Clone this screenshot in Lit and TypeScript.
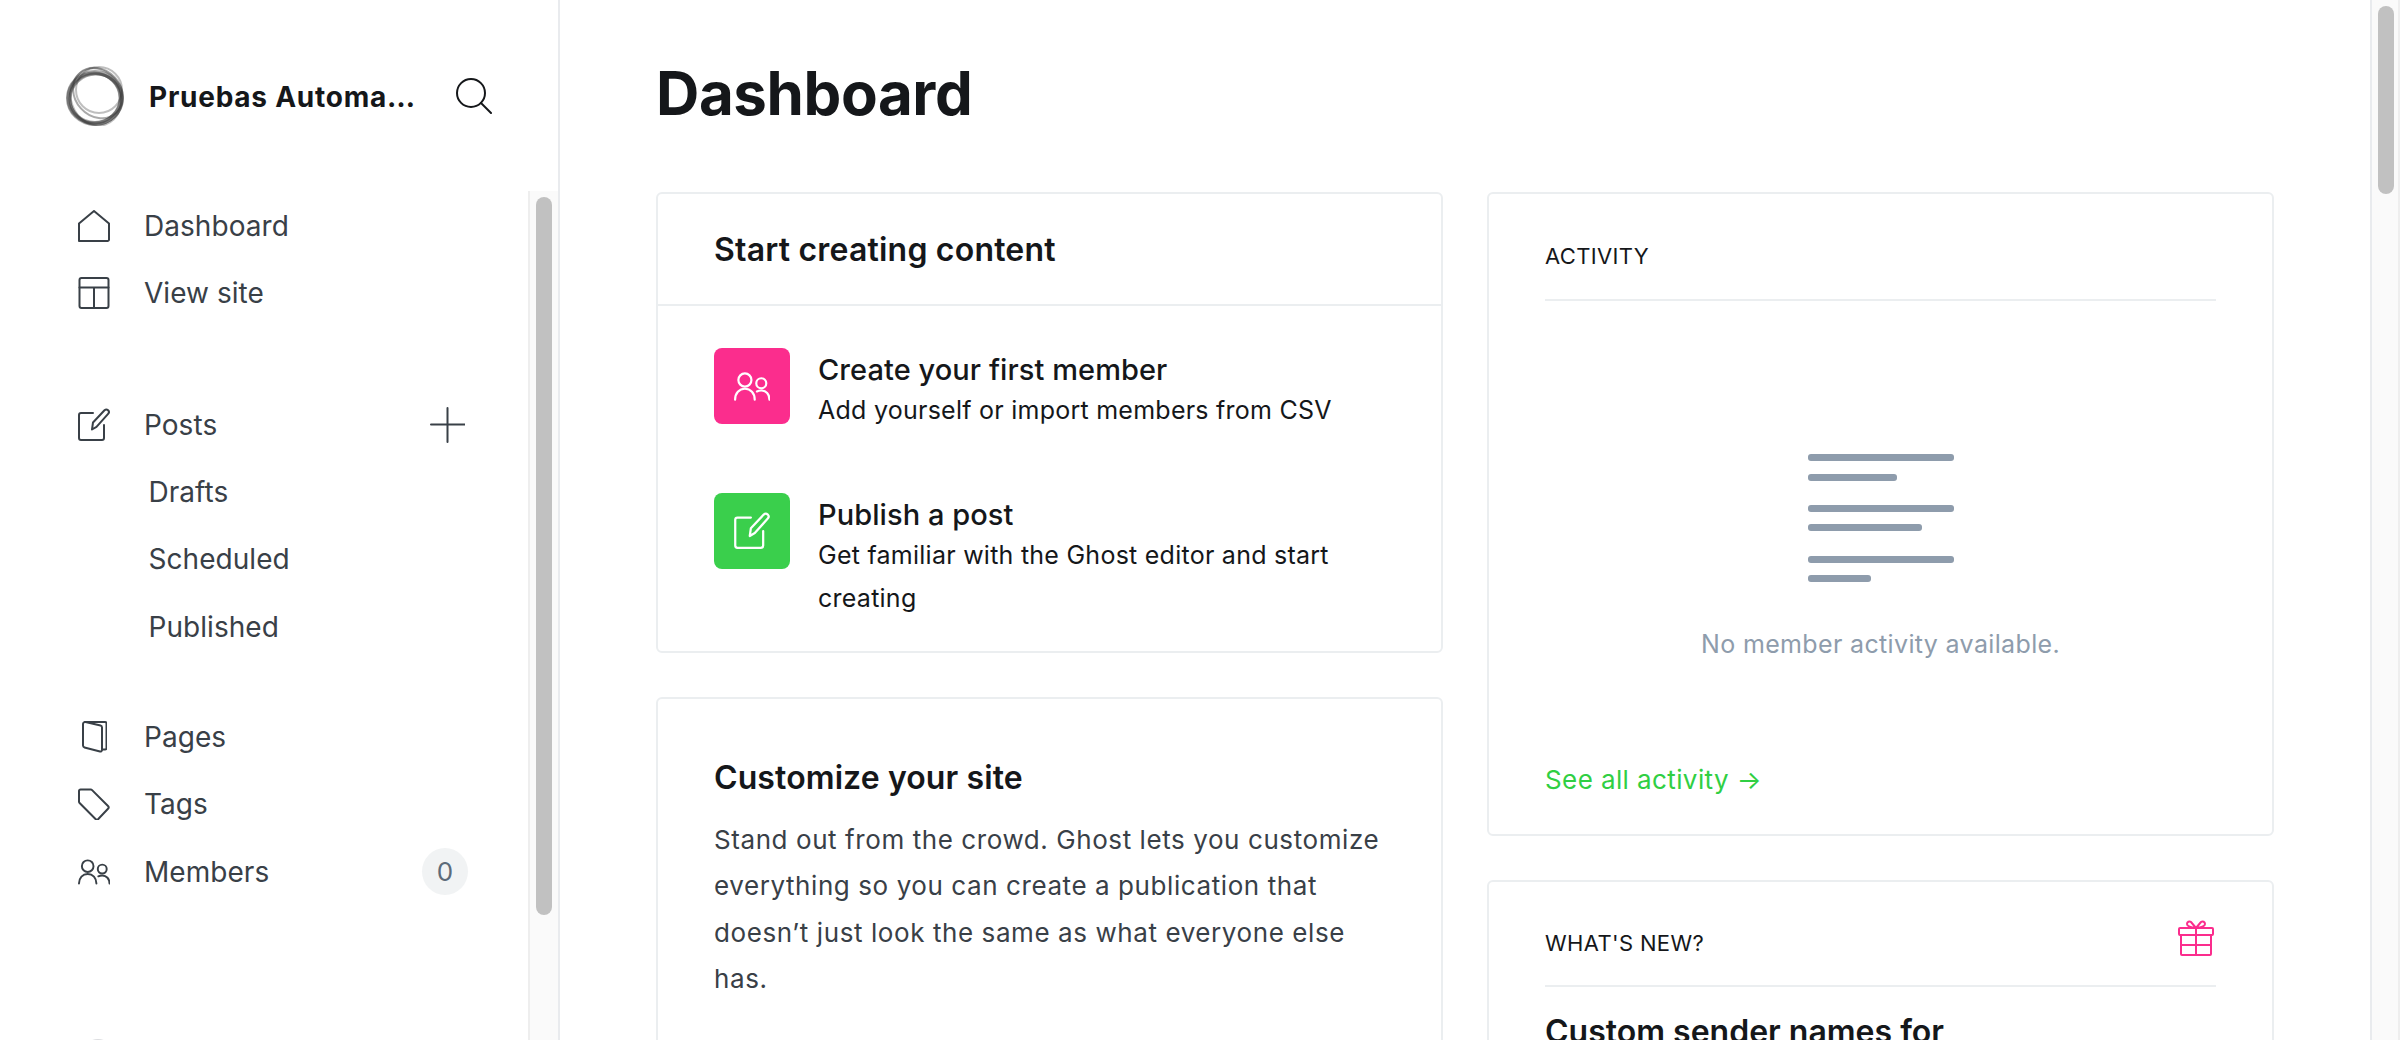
import { LitElement, html, css, svg } from "lit";
import { customElement } from "lit/decorators.js";

const ic = (body: unknown, w = 32, h = 32, vb = "0 0 32 32", cls = "") =>
  html`<svg class=${cls} width=${w} height=${h} viewBox=${vb} fill="none" stroke="currentColor" stroke-width="2" stroke-linecap="round" stroke-linejoin="round">${body}</svg>`;

const home = svg`<path d="M1 31V13.500L16 1l15 12.500V29.500a1.500 1.500 0 0 1-1.500 1.500H2.500A1.500 1.500 0 0 1 1 29.500z"/>`;
const layout = svg`<rect x="1.500" y="1" width="29" height="30" rx="2"/><path d="M1.500 10.500h29M16 10.500V31"/>`;
const edit = svg`<path d="M15 5H3a2 2 0 0 0-2 2v23a2 2 0 0 0 2 2h21a2 2 0 0 0 2-2V17"/><path d="M14 21.500l1-7L26.500 2.300a2.600 2.600 0 0 1 3.600 0 2.600 2.600 0 0 1 0 3.600L18.500 18.800z"/>`;
const page = svg`<path d="M3 1h20a1.500 1.500 0 0 1 1.500 1.500V27a1.500 1.500 0 0 1-1.500 1.500h-3"/><path d="M1 3a2 2 0 0 1 2.500-1.900l15 3.400a2 2 0 0 1 1.500 2V29a1.500 1.500 0 0 1-2 1.500L2.500 26.500A2 2 0 0 1 1 24.600z"/>`;
const tag = svg`<path d="M2.500 1.500h10.200a2 2 0 0 1 1.400.6L30 18a2 2 0 0 1 0 2.800L20.300 31a2 2 0 0 1-2.800 0L1.600 15a2 2 0 0 1-.6-1.400V3a1.500 1.500 0 0 1 1.500-1.500z"/>`;
const people = svg`<circle cx="10" cy="8" r="6"/><path d="M1 26c0-6 3.800-10 9-10s9 4 9 10"/><circle cx="25" cy="11" r="4.600"/><path d="M21 18.500c1.200-.6 2.500-.9 4-.9 4.400 0 7.500 3.400 7.500 8.400"/>`;
const gift = svg`<rect x="1" y="9" width="34" height="7" rx="1"/><rect x="3" y="16" width="30" height="20" rx="1"/><path d="M18 9v27M3 26h30M18 9l-5-6a2.500 2.500 0 0 0-4 2c0 2 4 3.500 9 4zM18 9l5-6a2.500 2.500 0 0 1 4 2c0 2-4 3.500-9 4z"/>`;

const rows1 = [
  { t: "Dashboard", i: home },
  { t: "View site", i: layout },
];

@customElement("app-root")
export class AppRoot extends LitElement {
  static styles = css`
    :host { display: block; width: 2400px; height: 1040px; overflow: hidden; background: #fff; font-family: Inter, "Liberation Sans", sans-serif; color: #15171a; }
    * { box-sizing: border-box; }
    .app { display: flex; height: 1040px; }
    .side { width: 560px; flex: none; border-right: 2px solid #e9ebee; display: flex; flex-direction: column; height: 1040px; }
    .brand { height: 191px; flex: none; display: flex; align-items: center; padding-left: 65px; }
    .logo { flex: none; }
    .title { width: 267px; margin-left: 23px; padding-top: 3px; font-size: 28px; font-weight: 700; letter-spacing: 0.75px; white-space: nowrap; overflow: hidden; text-overflow: ellipsis; }
    .search { margin-left: 40px; color: #15171a; display: block; }
    .sbody { flex: 1; display: flex; min-height: 0; }
    nav { flex: 1; overflow: hidden; padding-top: 1.5px; }
    .group { display: flex; flex-direction: column; }
    .g2 { margin-top: 64.5px; }
    .g3 { margin-top: 43.5px; }
    .g4 { margin-top: 116px; }
    .row { height: 67.2px; display: flex; align-items: center; padding-left: 78px; font-size: 28px; color: #394047; letter-spacing: 0.05px; flex: none; }
    .row svg.nico { flex: none; margin-right: 34px; color: #394047; }
    .row svg.nico.pg { margin-left: 4px; margin-right: 37px; }
    .sub { padding-left: 148.5px; }
    .end { margin-left: auto; }
    .plus { color: #394047; }
    .posts { padding-right: 63px; }
    .members { padding-right: 60px; }
    .badge { margin-left: auto; width: 46px; height: 47px; border-radius: 50%; background: #f1f3f4; color: #5d6b7a; font-size: 26px; display: flex; align-items: center; justify-content: center; letter-spacing: 0; }
    .faint { padding-left: 82px; }
    .faint svg { color: #dcdde0; }
    .track { width: 30px; flex: none; background: #fafafa; border-left: 2px solid #eeeeee; padding: 6px 6px 0 6px; }
    .thumb { width: 16px; background: #c1c1c1; border-radius: 8px; }
    .sthumb { height: 718px; }
    .main { flex: 1; min-width: 0; padding: 0 96px; overflow: hidden; }
    h1 { margin: 0; height: 192px; padding-top: 56px; font-size: 60px; line-height: 75px; font-weight: 700; letter-spacing: -0.4px; color: #15171a; }
    .cols { display: grid; grid-template-columns: 787px 787px; gap: 44px; align-items: start; }
    .col { display: flex; flex-direction: column; }
    .card { border: 2px solid #ebeef0; border-radius: 6px; background: #fff; }
    .c1 { height: 461px; }
    .c2 { margin-top: 44px; height: 600px; padding: 57px 56px 56px; }
    .chead { height: 112px; border-bottom: 2px solid #ebeef0; padding: 0 56px; display: flex; align-items: center; font-size: 32px; font-weight: 600; letter-spacing: 0.2px; }
    .items { padding: 42px 56px 0; display: flex; flex-direction: column; gap: 61.3px; }
    .item { display: flex; align-items: flex-start; }
    .tile { flex: none; width: 76px; height: 76px; border-radius: 8px; display: flex; align-items: center; justify-content: center; color: #fff; margin-right: 28px; }
    .pink { background: #fb2d8d; }
    .green { background: #3acf4c; }
    .ititle { font-size: 29px; line-height: 44px; font-weight: 500; letter-spacing: 0.07px; color: #15171a; }
    .idesc { font-size: 25px; line-height: 43px; letter-spacing: 0.25px; color: #15171a; margin-top: -3px; }
    .h2 { margin: 0; font-size: 32px; line-height: 44px; font-weight: 600; letter-spacing: 0.1px; color: #15171a; }
    .para { margin: 17px 0 0; font-size: 26px; line-height: 46.4px; letter-spacing: 0.58px; color: #394047; }
    .c3 { height: 644px; padding: 0 56px; display: flex; flex-direction: column; }
    .label { height: 107px; padding-top: 19px; border-bottom: 2px solid #ebeef0; display: flex; align-items: center; justify-content: space-between; flex: none; font-size: 22px; letter-spacing: 0.35px; color: #15171a; }
    .empty { display: flex; flex-direction: column; align-items: center; padding-top: 153px; }
    .bars { width: 146px; display: flex; flex-direction: column; align-items: flex-start; }
    .bar { height: 7px; border-radius: 3px; background: #8e9cac; }
    .msg { margin-top: 43px; font-size: 25px; line-height: 38px; letter-spacing: 0.35px; color: #8e9cac; white-space: nowrap; }
    .link { margin-top: auto; margin-bottom: 35px; font-size: 26px; line-height: 38px; letter-spacing: 0.4px; color: #30cf43; }
    .c4 { margin-top: 44px; height: 600px; padding: 0 56px; }
    .c4 .label { height: 105px; padding-top: 19px; }
    .gift { color: #fb2d8d; margin: -11px 2px 0 0; }
    .news { margin: 23px 0 0; font-size: 32px; line-height: 44px; font-weight: 600; color: #15171a; }
    .mtrack { width: 30px; flex: none; background: #fafafa; border-left: 2px solid #e9ebee; border-right: 2px solid #eeeeee; padding: 6px 4px 0 6px; }
    .mthumb { height: 188px; }
  `;

  render() {
    const row = (t: string, i: unknown) => html`<div class="row">${ic(i, 32, 32, "0 0 32 32", "nico")}<span>${t}</span></div>`;
    const bars = [
      [146, 0], [89, 13], [146, 24], [114, 12], [146, 25], [63, 12],
    ];
    return html`<div class="app">
      <aside class="side">
        <div class="brand">
          <svg class="logo" width="61" height="60" viewBox="0 0 61 60" fill="none" stroke="#2b2b2b" stroke-opacity=".4" stroke-width="2">
            <ellipse cx="30" cy="32" rx="26.500" ry="25.500" stroke-width="5"/>
            <ellipse cx="29" cy="32" rx="26" ry="25" stroke-width="3"/>
            <ellipse cx="31" cy="33" rx="26" ry="25" stroke-width="3"/>
            <ellipse cx="33" cy="27" rx="27" ry="23" transform="rotate(48 33 27)" stroke-width="2"/>
            <ellipse cx="34" cy="24" rx="23" ry="23" stroke-width="2" stroke-opacity=".3"/>
            <ellipse cx="31" cy="31" rx="29" ry="25" transform="rotate(70 31 31)" stroke-width="2" stroke-opacity=".3"/>
          </svg>
          <div class="title">Pruebas Automatizadas</div>
          ${ic(svg`<circle cx="15" cy="15" r="14"/><path d="M25 25l10 10"/>`, 36, 36, "0 0 36 36", "search")}
        </div>
        <div class="sbody">
          <nav>
            <div class="group">${rows1.map((r) => row(r.t, r.i))}</div>
            <div class="group g2">
              <div class="row posts">${ic(edit, 32, 34, "0 0 32 34", "nico")}<span>Posts</span>
                ${ic(svg`<path d="M17.500 1v34M1 17.500h34"/>`, 35, 36, "0 0 35 36", "end plus")}
              </div>
              <div class="row sub">Drafts</div>
              <div class="row sub">Scheduled</div>
              <div class="row sub">Published</div>
            </div>
            <div class="group g3">
              <div class="row">${ic(page, 25, 32, "0 0 25 32", "nico pg")}<span>Pages</span></div>
              ${row("Tags", tag)}
              <div class="row members">${ic(people, 32, 27, "0 0 33 27", "nico")}<span>Members</span><span class="badge">0</span></div>
            </div>
            <div class="group g4"><div class="row faint">${ic(svg`<circle cx="16" cy="16" r="15"/>`, 32, 32, "0 0 32 32")}</div></div>
          </nav>
          <div class="track"><div class="thumb sthumb"></div></div>
        </div>
      </aside>
      <main class="main">
        <h1>Dashboard</h1>
        <div class="cols">
          <div class="col">
            <section class="card c1">
              <div class="chead">Start creating content</div>
              <div class="items">
                <div class="item">
                  <div class="tile pink">${ic(people, 36, 30, "0 0 33 27")}</div>
                  <div><div class="ititle">Create your first member</div><div class="idesc">Add yourself or import members from CSV</div></div>
                </div>
                <div class="item">
                  <div class="tile green">${ic(edit, 36, 38, "0 0 32 34")}</div>
                  <div><div class="ititle">Publish a post</div><div class="idesc">Get familiar with the Ghost editor and start creating</div></div>
                </div>
              </div>
            </section>
            <section class="card c2">
              <h2 class="h2">Customize your site</h2>
              <p class="para">Stand out from the crowd. Ghost lets you customize everything so you can create a publication that doesn’t just look the same as what everyone else has.</p>
            </section>
          </div>
          <div class="col">
            <section class="card c3">
              <div class="label">ACTIVITY</div>
              <div class="empty">
                <div class="bars">${bars.map(([w, m]) => html`<div class="bar" style="width:${w}px;margin-top:${m}px"></div>`)}</div>
                <div class="msg">No member activity available.</div>
              </div>
              <div class="link">See all activity →</div>
            </section>
            <section class="card c4">
              <div class="label">WHAT'S NEW?${ic(gift, 36, 37, "0 0 36 37", "gift")}</div>
              <h2 class="news">Custom sender names for</h2>
            </section>
          </div>
        </div>
      </main>
      <div class="mtrack"><div class="thumb mthumb"></div></div>
    </div>`;
  }
}
